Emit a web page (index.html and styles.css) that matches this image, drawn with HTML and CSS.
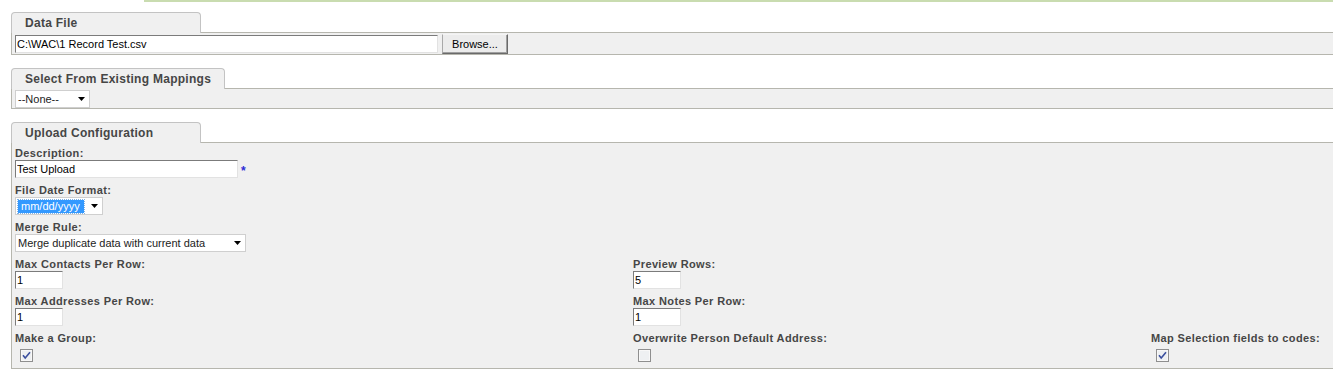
FILE: index.html
```html
<!DOCTYPE html>
<html lang="en">
<head>
<meta charset="utf-8">
<title>Upload</title>
<link rel="stylesheet" href="styles.css">
</head>
<body>
<div class="topline"></div>
<div class="page">

  <section class="group group-file">
    <div class="tabrow"><div class="tab">Data File</div><div class="tabfill"></div></div>
    <div class="panel panel-file">
      <input class="textbox textbox-file" type="text" value="C:\WAC\1 Record Test.csv">
      <button class="browse" type="button">Browse...</button>
    </div>
  </section>

  <section class="group group-map">
    <div class="tabrow"><div class="tab">Select From Existing Mappings</div><div class="tabfill"></div></div>
    <div class="panel panel-map">
      <div class="select select-none"><span class="select-text">--None--</span><svg class="select-arrow" width="7" height="4" viewBox="0 0 7 4"><path d="M0 0H7L3.5 4Z" fill="#000"/></svg></div>
    </div>
  </section>

  <section class="group group-config">
    <div class="tabrow"><div class="tab">Upload Configuration</div><div class="tabfill"></div></div>
    <div class="panel panel-config">
      <div class="config-grid">
        <div class="field c1">
          <label class="label">Description:</label>
          <div class="row-inline">
            <input class="textbox textbox-desc" type="text" value="Test Upload">
            <span class="required">*</span>
          </div>
        </div>
        <div class="field c1">
          <label class="label">File Date Format:</label>
          <div class="select select-date"><span class="select-text"><span class="selected">mm/dd/yyyy</span></span><svg class="select-arrow" width="7" height="4" viewBox="0 0 7 4"><path d="M0 0H7L3.5 4Z" fill="#000"/></svg></div>
        </div>
        <div class="field c1">
          <label class="label">Merge Rule:</label>
          <div class="select select-merge"><span class="select-text">Merge duplicate data with current data</span><svg class="select-arrow" width="7" height="4" viewBox="0 0 7 4"><path d="M0 0H7L3.5 4Z" fill="#000"/></svg></div>
        </div>
        <div class="field c1">
          <label class="label">Max Contacts Per Row:</label>
          <input class="textbox textbox-small" type="text" value="1">
        </div>
        <div class="field c2">
          <label class="label">Preview Rows:</label>
          <input class="textbox textbox-small" type="text" value="5">
        </div>
        <div class="field c1">
          <label class="label">Max Addresses Per Row:</label>
          <input class="textbox textbox-small" type="text" value="1">
        </div>
        <div class="field c2">
          <label class="label">Max Notes Per Row:</label>
          <input class="textbox textbox-small" type="text" value="1">
        </div>
        <div class="field c1">
          <label class="label">Make a Group:</label>
          <span class="check"><svg width="13" height="13" viewBox="0 0 13 13"><rect x="0.5" y="0.5" width="12" height="12" fill="#dfe1e4" stroke="#8f8f8f"/><rect x="1.5" y="1.5" width="10" height="10" fill="#eef0f2" stroke="#f8f8f8"/><path d="M3 6.3L5.2 9 10 3.2" fill="none" stroke="#3b4f9e" stroke-width="1.6"/></svg></span>
        </div>
        <div class="field c2">
          <label class="label">Overwrite Person Default Address:</label>
          <span class="check"><svg width="13" height="13" viewBox="0 0 13 13"><rect x="0.5" y="0.5" width="12" height="12" fill="#dfe1e4" stroke="#8f8f8f"/><rect x="1.5" y="1.5" width="10" height="10" fill="#eef0f2" stroke="#f8f8f8"/></svg></span>
        </div>
        <div class="field c3">
          <label class="label">Map Selection fields to codes:</label>
          <span class="check"><svg width="13" height="13" viewBox="0 0 13 13"><rect x="0.5" y="0.5" width="12" height="12" fill="#dfe1e4" stroke="#8f8f8f"/><rect x="1.5" y="1.5" width="10" height="10" fill="#eef0f2" stroke="#f8f8f8"/><path d="M3 6.3L5.2 9 10 3.2" fill="none" stroke="#3b4f9e" stroke-width="1.6"/></svg></span>
        </div>
      </div>
    </div>
  </section>

</div>
</body>
</html>
```

FILE: styles.css
```css
html, body {
  margin: 0;
  padding: 0;
  background: #fff;
}

body {
  font-family: "Liberation Sans", Arial, sans-serif;
  font-size: 11px;
  color: #000;
}

.topline {
  height: 2px;
  margin-left: 144px;
  background: #c9dcb0;
}

.page {
  padding: 10px 0 0 11px;
}

.group + .group {
  margin-top: 13px;
}

.tabrow {
  display: flex;
  height: 21px;
}

.tab {
  box-sizing: border-box;
  min-width: 190px;
  height: 21px;
  padding: 1px 13px 0 13px;
  border: 1px solid #c3c3c3;
  border-bottom: none;
  border-radius: 4px 4px 0 0;
  background: #f0f0f0;
  color: #464646;
  font-weight: bold;
  font-size: 12px;
  letter-spacing: 0.28px;
  line-height: 19px;
  white-space: nowrap;
}

.tabfill {
  flex: 1;
  border-bottom: 1px solid #b6b6ae;
}

.panel {
  background: #f0f0f0;
  border-left: 1px solid #b6b6ae;
  border-bottom: 1px solid #b6b6ae;
  padding-left: 3px;
}

.panel-file {
  display: flex;
  align-items: center;
  gap: 4px;
  height: 21px;
}

.panel-map {
  height: 19px;
  padding-top: 0;
  display: flex;
  align-items: flex-start;
}

.panel-config {
  padding-top: 3px;
  padding-bottom: 6px;
}

.textbox {
  box-sizing: border-box;
  height: 18px;
  margin: 0;
  padding: 0 0 0 1px;
  border: 1px solid;
  border-color: #7b7b7b #e2e2e2 #e2e2e2 #7b7b7b;
  background: #fff;
  font-family: "Liberation Sans", Arial, sans-serif;
  font-size: 11px;
  color: #000;
  outline: none;
}

.textbox-file {
  width: 423px;
}

.textbox-desc {
  width: 223px;
}

.textbox-small {
  width: 48px;
}

.browse {
  box-sizing: border-box;
  width: 66px;
  height: 20px;
  margin: 1px 0 0 0;
  padding: 0;
  border: 1px solid;
  border-color: #f4f4f4 #6a6a6a #6a6a6a #a9a9a9;
  box-shadow: inset -1px -1px 0 #a0a0a0;
  background: #ececec;
  font-family: "Liberation Sans", Arial, sans-serif;
  font-size: 11px;
  color: #000;
}

.select {
  box-sizing: border-box;
  display: flex;
  align-items: center;
  justify-content: space-between;
  height: 18px;
  padding: 0 4px 0 2px;
  border: 1px solid #cfcfcf;
  background: #fff;
  font-size: 11px;
  color: #222;
  white-space: nowrap;
}

.select-none {
  width: 75px;
  margin-top: 1px;
}

.select-date {
  width: 88px;
}

.select-merge {
  width: 231px;
}

.selected {
  display: inline-block;
  padding: 0 4px 0 3px;
  line-height: 13px;
  background: #3399ff;
  color: #fff;
  outline: 1px dotted #7fb2e6;
}

.config-grid {
  display: grid;
  grid-template-columns: 618px 518px 1fr;
  row-gap: 5px;
}

.c1 { grid-column: 1; }
.c2 { grid-column: 2; }
.c3 { grid-column: 3; }

.field {
  display: flex;
  flex-direction: column;
  align-items: flex-start;
}

.label {
  display: block;
  line-height: 14px;
  font-weight: bold;
  font-size: 11px;
  letter-spacing: 0.38px;
  color: #464646;
  white-space: nowrap;
}

.row-inline {
  display: flex;
  align-items: center;
  gap: 3px;
}

.required {
  color: #2b2bd6;
  font-weight: bold;
  font-size: 12px;
  line-height: 12px;
  padding-top: 3px;
}

.check {
  display: block;
  width: 13px;
  height: 13px;
  margin: 4px 0 0 5px;
}

.check svg {
  display: block;
}
```
